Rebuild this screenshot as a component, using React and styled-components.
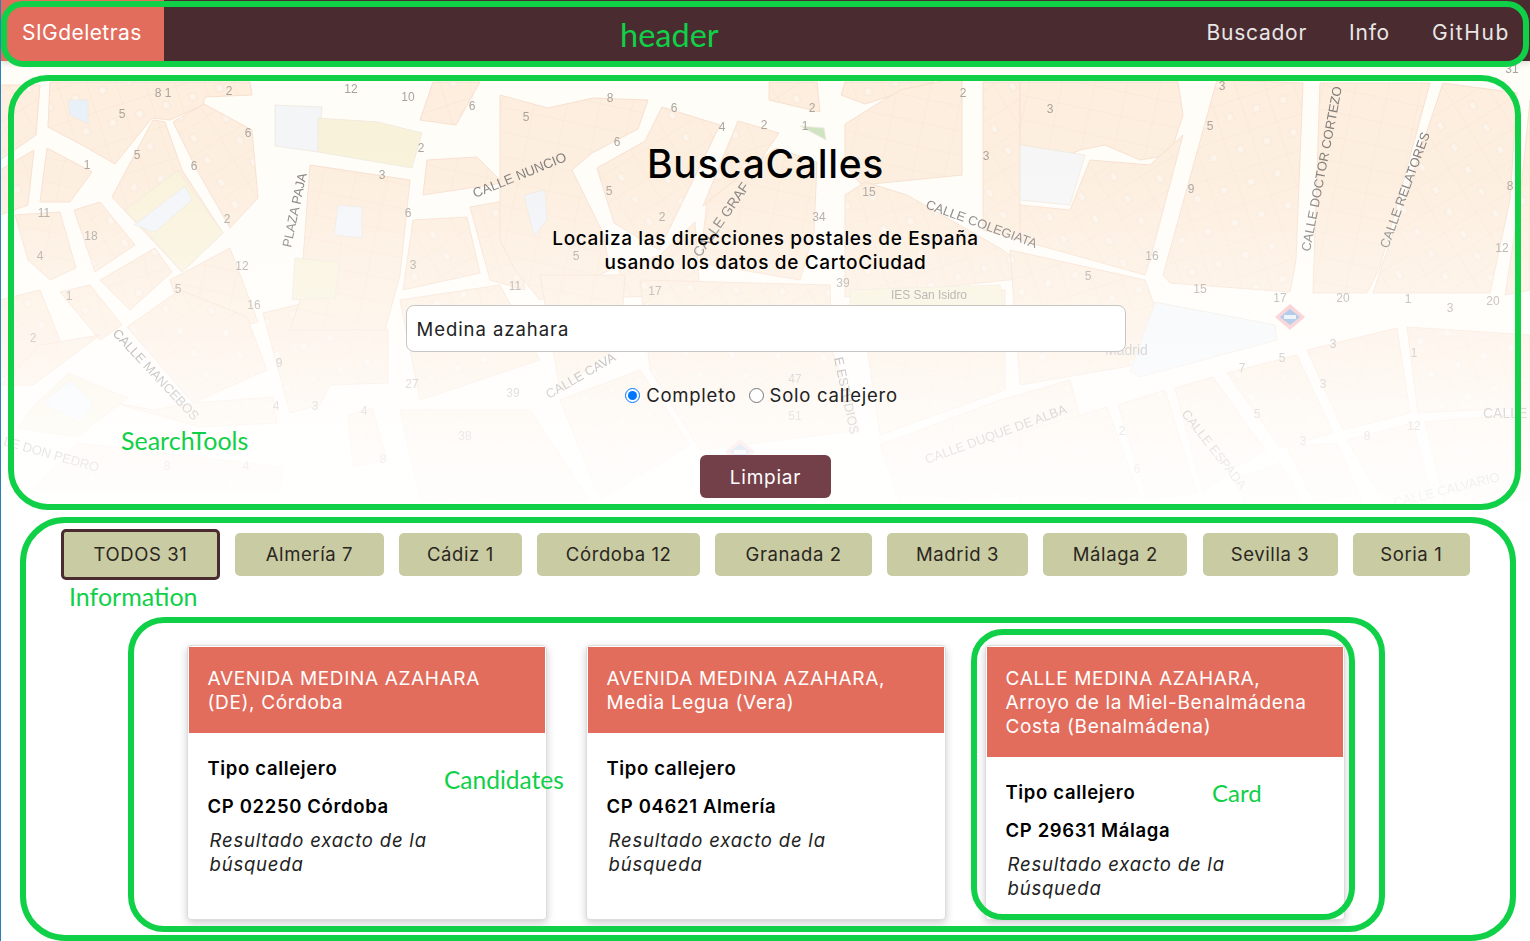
import styled, { createGlobalStyle } from "styled-components";

const GlobalStyle = createGlobalStyle`
  html, body {
    margin: 0;
    padding: 0;
    background: #fff;
  }
  * {
    box-sizing: border-box;
  }
`;

const uiFont = `Inter, "Open Sans", Arial, sans-serif`;

const Page = styled.div`
  position: relative;
  width: 1530px;
  height: 941px;
  overflow: hidden;
  border-left: 1px solid #2a80b9;
  background: #fff;
  color: #000;
  font-family: ${uiFont};
`;

const Navbar = styled.header`
  position: relative;
  z-index: 2;
  display: flex;
  align-items: center;
  justify-content: space-between;
  height: 61px;
  padding-right: 20px;
  background: #4a2c30;
  box-shadow: 0 2px 6px rgba(0, 0, 0, 0.15);
`;

const Brand = styled.a`
  display: flex;
  align-items: center;
  width: 163px;
  height: 100%;
  padding: 4px 0 0 21px;
  background: #e36d5d;
  color: #fff;
  font-size: 21px;
  letter-spacing: 0.45px;
`;

const NavLinks = styled.nav`
  display: flex;
  gap: 42px;
  padding-top: 4px;
`;

const NavLink = styled.a`
  color: #e9e6e6;
  font-size: 21px;
  letter-spacing: ${(p) => p.$track || 0.75}px;
`;

const Hero = styled.section`
  position: relative;
  display: flex;
  flex-direction: column;
  align-items: center;
  height: 449px;
  padding-top: 80px;
  overflow: hidden;
`;

const MapLayer = styled.svg`
  position: absolute;
  top: 0;
  left: -1px;
`;

const Title = styled.h1`
  position: relative;
  margin: 0;
  font-size: 39px;
  line-height: 46px;
  font-weight: 500;
  letter-spacing: 0.7px;
`;

const Subtitle = styled.p`
  position: relative;
  margin: 40px 0 0;
  font-size: 19px;
  line-height: 24px;
  font-weight: 500;
  letter-spacing: 0.65px;
  text-align: center;
`;

const SearchInput = styled.input`
  position: relative;
  display: block;
  width: 720px;
  height: 47px;
  margin-top: 30px;
  padding: 1px 10px 0;
  border: 1px solid #c9c5c5;
  border-radius: 8px;
  background: #fff;
  color: #222;
  font-family: ${uiFont};
  font-size: 18.5px;
  letter-spacing: 0.95px;
  outline: none;
`;

const RadioRow = styled.div`
  position: relative;
  display: flex;
  align-items: center;
  height: 24px;
  margin: 31px 8px 0 0;
  gap: 12px;
`;

const RadioLabel = styled.label`
  display: flex;
  align-items: center;
  gap: 6px;
  font-size: 18.5px;
  letter-spacing: 0.75px;
  color: #222;
`;

const Radio = styled.input`
  width: 15px;
  height: 15px;
  margin: 0;
`;

const ClearButton = styled.button`
  position: relative;
  width: 131px;
  height: 43px;
  margin-top: 48px;
  padding-top: 2px;
  border: 0;
  border-radius: 6px;
  background: #733f48;
  color: #fff;
  font-family: ${uiFont};
  font-size: 19px;
  letter-spacing: 0.75px;
`;

const Information = styled.section`
  padding-top: 19px;
`;

const Tabs = styled.div`
  display: flex;
  align-items: center;
  gap: 15.25px;
  padding-left: 60px;
`;

const Tab = styled.button`
  flex: none;
  width: ${(p) => p.$width}px;
  height: ${(p) => (p.$active ? 51 : 43)}px;
  padding-bottom: 2px;
  border: ${(p) => (p.$active ? "3px solid #4a2c30" : "0")};
  border-radius: 5px;
  background: #c9cba3;
  color: #2a2620;
  font-family: ${uiFont};
  font-size: 18.5px;
  letter-spacing: 0.6px;
`;

const Cards = styled.div`
  display: grid;
  grid-template-columns: repeat(3, 360px);
  justify-content: center;
  column-gap: 39px;
  margin-top: 65px;
`;

const Card = styled.article`
  display: flex;
  flex-direction: column;
  min-height: 275px;
  border: 1px solid #dcdcdc;
  border-radius: 4px;
  padding: 1px;
  background: #fff;
  box-shadow: 0 3px 8px rgba(0, 0, 0, 0.2);
`;

const CardTitle = styled.h3`
  margin: 0;
  padding: 20px 19px 18px;
  background: #e36d5d;
  color: #fff;
  font-size: 19px;
  line-height: 24px;
  font-weight: 400;
  letter-spacing: 0.65px;
  white-space: pre-line;
`;

const CardBody = styled.div`
  display: flex;
  flex-direction: column;
  padding: 23px 19px 18px;
`;

const CardLine = styled.p`
  margin: 0 0 14px;
  font-size: 18.5px;
  line-height: 24px;
  font-weight: 600;
  letter-spacing: 0.65px;
`;

const CardNote = styled.p`
  width: 240px;
  margin: -4px 0 0 2px;
  font-size: 18.5px;
  line-height: 24px;
  font-style: italic;
  letter-spacing: 0.8px;
  color: #222;
`;

/* review annotations drawn on top of the screenshot */
const Outline = styled.div`
  position: absolute;
  z-index: 5;
  left: ${(p) => p.$x}px;
  top: ${(p) => p.$y}px;
  width: ${(p) => p.$w}px;
  height: ${(p) => p.$h}px;
  border: 6px solid #10d048;
  border-radius: ${(p) => p.$r}px;
  pointer-events: none;
`;

const Note = styled.span`
  position: absolute;
  z-index: 6;
  left: ${(p) => p.$x}px;
  top: ${(p) => p.$y}px;
  color: #10d048;
  font-family: Lato, "Open Sans", sans-serif;
  font-size: ${(p) => p.$size}px;
  line-height: 1;
`;

const blocks = [
  // left
  ["48,127 50,82 250,82 252,95 205,97 203,105 170,120 152,118 115,164 82,145", "a"],
  ["40,202 47,148 92,172 70,202", "b"],
  ["112,197 153,120 165,122 182,170 223,233 182,272", "a"],
  ["173,122 204,104 252,130 258,198 230,228 197,170", "c"],
  ["15,215 60,212 76,268 50,280 28,260", "b"],
  ["74,210 100,202 135,245 95,272", "c"],
  ["100,280 155,248 172,272 130,310", "a"],
  ["170,280 230,248 258,322 190,340", "b"],
  ["0,300 40,290 60,340 0,380", "c"],
  ["60,292 90,285 122,325 100,340", "a"],
  ["40,345 100,335 33,385 0,385", "b"],
  ["127,327 180,290 247,317 267,370 193,403", "c"],
  ["263,313 330,297 388,330 388,383 330,385 320,405 290,413", "a"],
  ["115,403 153,410 193,403 273,397 277,423 200,427", "b"],
  ["77,443 283,467 280,490 33,490", "c"],
  ["348,415 372,408 387,460 353,467", "a"],
  ["300,300 310,165 410,180 400,275 385,330 290,330", "b"],
  ["0,85 40,85 36,135 0,160", "c"],
  ["0,170 34,150 28,205 0,215", "a"],
  // centre
  ["420,120 433,82 480,82 456,125", "a"],
  ["427,160 477,157 503,183 423,195", "b"],
  ["413,220 467,217 480,273 403,290", "c"],
  ["470,207 510,200 525,290 490,280", "a"],
  ["500,95 548,108 593,98 648,100 638,129 592,153 572,170 603,233 610,270 540,300 515,270 500,240", "b"],
  ["662,107 720,125 679,209 659,250 614,223 597,168 645,141", "c"],
  ["738,121 779,133 748,178 703,206", "a"],
  ["707,202 776,148 817,162 814,233 800,280 700,263", "b"],
  ["769,82 817,82 820,112 769,100", "c"],
  ["845,82 934,82 865,104 841,95", "a"],
  ["845,124 900,90 962,77 962,175 862,185 845,165", "b"],
  ["983,82 1020,82 1020,240 983,230", "c"],
  ["845,195 865,182 907,195 1003,250 1038,277 845,297", "a"],
  ["620,270 660,255 695,222 700,295 620,297", "c"],
  // lower middle
  ["400,300 500,285 540,360 420,400", "a"],
  ["540,275 625,275 620,345 560,390", "b"],
  ["640,280 830,285 832,350 860,430 700,450 650,370", "c"],
  ["560,400 640,370 690,445 600,500", "a"],
  ["400,410 530,410 590,500 420,500", "b"],
  ["880,445 1000,400 1070,380 1100,490 900,505", "c"],
  ["1010,250 1145,280 1160,320 1135,365 1020,385", "a"],
  ["860,300 1005,290 1005,390 880,435", "b"],
  // right
  ["1020,82 1178,82 1183,115 1170,155 1140,160 1105,145 1080,150 1058,160 1020,150", "b"],
  ["1020,205 1070,210 1090,160 1150,165 1183,135 1150,260 1145,275 1020,240", "c"],
  ["1217,80 1303,83 1296,260 1290,292 1170,283 1163,275", "a"],
  ["1320,83 1430,83 1380,267 1367,293 1313,293", "b"],
  ["1443,83 1517,93 1510,200 1490,293 1373,293", "c"],
  ["1530,100 1530,290 1505,295 1520,200", "a"],
  ["1307,350 1397,328 1410,413 1343,430", "b"],
  ["1227,373 1297,355 1333,433 1280,448", "c"],
  ["1407,327 1530,335 1530,407 1418,413", "a"],
  ["1175,388 1213,377 1265,450 1237,467 1203,493", "b"],
  ["1118,405 1165,390 1197,493 1147,500", "c"],
  ["1020,433 1107,407 1140,497 1020,507", "a"],
  ["1347,440 1413,423 1433,503 1385,505", "b"],
  ["1425,422 1510,415 1530,410 1530,500 1445,505", "c"],
  ["1287,447 1337,443 1363,503 1313,500", "a"],
  ["1233,480 1280,463 1303,503 1247,507", "b"],
];

const tinted = [
  ["275,105 322,107 318,152 275,146", "#f4f5f7"],
  ["318,118 378,122 422,133 412,168 318,152", "#f9f2da"],
  ["125,210 178,170 223,233 182,272 150,235", "#f9f2da"],
  ["134,225 185,186 192,200 155,232", "#f2f5f9"],
  ["295,258 340,262 335,298 292,300", "#f9f2da"],
  ["338,205 362,207 362,238 334,235", "#f3f5f9"],
  ["68,100 88,100 88,124 70,115", "#e9f1f8"],
  ["524,195 545,190 547,220 534,236", "#f1f3f7"],
  ["1020,145 1085,155 1070,205 1020,200", "#f6f6f7"],
  ["68,373 128,398 77,437 17,428 33,407", "#f9f2da"],
  ["43,403 70,380 93,403 80,423", "#f2f5f9"],
  ["850,290 1000,285 1004,310 850,312", "#f9f2da"],
  ["1155,302 1160,303 1275,325 1277,340 1140,377 1130,372", "#f4f6f9"],
  ["800,126 824,128 826,140", "#cfe3c0"],
];

const streets = [
  ["PLAZA PAJA", 291, 248, -78, 13],
  ["CALLE NUNCIO", 475, 198, -22, 13.5],
  ["CALLE GRAF", 700, 258, -55, 14],
  ["CALLE COLEGIATA", 925, 208, 20, 13],
  ["CALLE DOCTOR CORTEZO", 1310, 252, -79, 13],
  ["CALLE RELATORES", 1388, 249, -70, 13],
  ["CALLE MANCEBOS", 112, 334, 47, 13],
  ["LE DON PEDRO", 3, 445, 16, 13],
  ["CALLE CAVA", 549, 399, -30, 13],
  ["E ESTUDIOS", 834, 358, 78, 13],
  ["CALLE DUQUE DE ALBA", 927, 464, -20, 13],
  ["CALLE ESPADA", 1181, 414, 52, 13],
  ["CALLE", 1483, 418, 0, 14],
  ["CALLE CALVARIO", 1395, 507, -14, 13],
];

const numbers = [
  [163, 97, "8 1"], [229, 95, "2"], [351, 93, "12"], [408, 101, "10"], [472, 110, "6"], [122, 118, "5"], [248, 137, "6"],
  [137, 159, "5"], [87, 169, "1"], [194, 170, "6"], [421, 152, "2"], [382, 179, "3"], [44, 217, "11"], [91, 240, "18"],
  [40, 260, "4"], [227, 223, "2"], [242, 270, "12"], [408, 217, "6"], [413, 269, "3"], [178, 293, "5"], [69, 300, "1"],
  [254, 309, "16"], [33, 342, "2"], [279, 367, "9"], [315, 410, "3"], [276, 410, "4"], [246, 470, "4"], [167, 470, "8"],
  [364, 415, "4"], [383, 463, "8"], [610, 102, "8"], [526, 121, "5"], [674, 112, "6"], [722, 131, "4"], [764, 129, "2"],
  [812, 112, "2"], [617, 146, "6"], [609, 195, "5"], [662, 221, "2"], [576, 260, "5"], [515, 290, "11"], [655, 295, "17"],
  [805, 130, "1"], [869, 196, "15"], [819, 221, "34"], [843, 287, "39"], [963, 97, "2"], [986, 160, "3"], [1050, 113, "3"],
  [1222, 90, "3"], [1210, 130, "5"], [1191, 193, "9"], [1152, 260, "16"], [1088, 280, "5"], [1200, 293, "15"], [1280, 302, "17"],
  [1343, 302, "20"], [1408, 303, "1"], [1450, 312, "3"], [1493, 305, "20"], [1502, 252, "12"], [1510, 190, "8"], [1512, 73, "31"],
  [1333, 348, "3"], [1282, 362, "5"], [1242, 372, "7"], [1323, 388, "3"], [1414, 357, "1"], [1257, 418, "5"], [1367, 440, "8"],
  [1414, 430, "12"], [1303, 445, "3"], [1122, 435, "2"], [1137, 473, "6"], [412, 388, "27"], [513, 397, "39"], [465, 440, "38"],
  [795, 420, "51"], [795, 383, "47"],
];

function MetroSign({ x, y }) {
  return (
    <g transform={`translate(${x} ${y})`}>
      <path d="M-15 0 L0 -13 L15 0 L0 13 Z" fill="#f6b9bd" />
      <path d="M-10 0 L0 -8 L10 0 L0 8 Z" fill="#7fa8dc" />
      <rect x="-6" y="-2" width="12" height="4" fill="#e3ecf8" />
    </g>
  );
}

// blurred street map behind the search box
function StreetMap() {
  return (
    <MapLayer width="1530" height="449" viewBox="0 61 1530 449">
      <defs>
        <pattern id="parcelA" width="28" height="34" patternUnits="userSpaceOnUse" patternTransform="rotate(-18)">
          <rect width="28" height="34" fill="#fdeede" />
          <path d="M0 0H28M0 0V34" stroke="#f9e2d1" strokeWidth="0.8" />
          <rect x="10" y="12" width="7" height="7" fill="#fdf4ea" stroke="#f9e2d1" strokeWidth="0.6" />
        </pattern>
        <pattern id="parcelB" width="32" height="24" patternUnits="userSpaceOnUse" patternTransform="rotate(12)">
          <rect width="32" height="24" fill="#fdeede" />
          <path d="M0 0H32M0 0V24" stroke="#f9e2d1" strokeWidth="0.8" />
        </pattern>
        <pattern id="parcelC" width="26" height="38" patternUnits="userSpaceOnUse" patternTransform="rotate(58)">
          <rect width="26" height="38" fill="#fdeede" />
          <path d="M0 0H26M0 0V38" stroke="#f9e2d1" strokeWidth="0.8" />
          <rect x="8" y="20" width="8" height="6" fill="#fdf4ea" stroke="#f9e2d1" strokeWidth="0.6" />
        </pattern>
        <linearGradient id="mapFade" x1="0" y1="0" x2="0" y2="1">
          <stop offset="0" stopColor="#fff" stopOpacity="0" />
          <stop offset="0.25" stopColor="#fff" stopOpacity="0.05" />
          <stop offset="0.55" stopColor="#fff" stopOpacity="0.4" />
          <stop offset="0.8" stopColor="#fff" stopOpacity="0.75" />
          <stop offset="1" stopColor="#fff" stopOpacity="0.95" />
        </linearGradient>
        <filter id="mapBlur">
          <feGaussianBlur stdDeviation="0.6" />
        </filter>
      </defs>
      <g filter="url(#mapBlur)">
        <rect x="0" y="61" width="1530" height="449" fill="#fffdf8" />
        {blocks.map(([points, kind]) => (
          <polygon key={points} points={points} fill={`url(#parcel${kind.toUpperCase()})`} stroke="#f8e0cf" strokeWidth="1" />
        ))}
        {tinted.map(([points, fill]) => (
          <polygon key={points} points={points} fill={fill} stroke="#efe7dc" strokeWidth="0.8" />
        ))}
        <g fontFamily="Liberation Sans, Arial, sans-serif" fill="#7d7a78">
          {streets.map(([text, x, y, angle, size]) => (
            <text key={text} x={x} y={y} fontSize={size} transform={`rotate(${angle} ${x} ${y})`}>
              {text}
            </text>
          ))}
        </g>
        <g fontFamily="Liberation Sans, Arial, sans-serif" fill="#a9a29c" fontSize="12" textAnchor="middle">
          {numbers.map(([x, y, text]) => (
            <text key={`${x}-${y}`} x={x} y={y}>
              {text}
            </text>
          ))}
        </g>
        <text x="891" y="299" fontFamily="Liberation Sans, Arial, sans-serif" fontSize="12" fill="#95908c" textLength="76">
          IES San Isidro
        </text>
        <text x="1105" y="355" fontFamily="Liberation Sans, Arial, sans-serif" fontSize="14" fill="#b0adab">
          Madrid
        </text>
        <MetroSign x={1290} y={317} />
        <MetroSign x={740} y={452} />
      </g>
      <rect x="0" y="61" width="1530" height="449" fill="url(#mapFade)" />
    </MapLayer>
  );
}

const provinces = [
  { name: "TODOS 31", width: 159, active: true },
  { name: "Almería 7", width: 148.4 },
  { name: "Cádiz 1", width: 123 },
  { name: "Córdoba 12", width: 163 },
  { name: "Granada 2", width: 156.4 },
  { name: "Madrid 3", width: 141 },
  { name: "Málaga 2", width: 144 },
  { name: "Sevilla 3", width: 135 },
  { name: "Soria 1", width: 117 },
];

const results = [
  { title: "AVENIDA MEDINA AZAHARA\n(DE), Córdoba", cp: "CP 02250 Córdoba" },
  { title: "AVENIDA MEDINA AZAHARA,\nMedia Legua (Vera)", cp: "CP 04621 Almería" },
  { title: "CALLE MEDINA AZAHARA,\nArroyo de la Miel-Benalmádena\nCosta (Benalmádena)", cp: "CP 29631 Málaga" },
];

export default function App() {
  return (
    <Page>
      <GlobalStyle />
      <Navbar>
        <Brand>SIGdeletras</Brand>
        <NavLinks>
          <NavLink>Buscador</NavLink>
          <NavLink>Info</NavLink>
          <NavLink $track={1.6}>GitHub</NavLink>
        </NavLinks>
      </Navbar>

      <Hero>
        <StreetMap />
        <Title>BuscaCalles</Title>
        <Subtitle>
          Localiza las direcciones postales de España
          <br />
          usando los datos de CartoCiudad
        </Subtitle>
        <SearchInput defaultValue="Medina azahara" />
        <RadioRow>
          <RadioLabel>
            <Radio type="radio" name="mode" defaultChecked />
            Completo
          </RadioLabel>
          <RadioLabel>
            <Radio type="radio" name="mode" />
            Solo callejero
          </RadioLabel>
        </RadioRow>
        <ClearButton>Limpiar</ClearButton>
      </Hero>

      <Information>
        <Tabs>
          {provinces.map((p) => (
            <Tab key={p.name} $width={p.width} $active={p.active}>
              {p.name}
            </Tab>
          ))}
        </Tabs>
        <Cards>
          {results.map((r) => (
            <Card key={r.cp}>
              <CardTitle>{r.title}</CardTitle>
              <CardBody>
                <CardLine>Tipo callejero</CardLine>
                <CardLine>{r.cp}</CardLine>
                <CardNote>Resultado exacto de la búsqueda</CardNote>
              </CardBody>
            </Card>
          ))}
        </Cards>
      </Information>

      <Outline $x={0} $y={1} $w={1528} $h={66} $r={22} />
      <Outline $x={7} $y={75} $w={1513} $h={435} $r={40} />
      <Outline $x={19} $y={517} $w={1496} $h={424} $r={45} />
      <Outline $x={127} $y={617} $w={1257} $h={315} $r={36} />
      <Outline $x={970} $y={629} $w={384} $h={291} $r={32} />

      <Note $x={619} $y={19} $size={32.5}>header</Note>
      <Note $x={120} $y={428} $size={25}>SearchTools</Note>
      <Note $x={68} $y={584} $size={25}>Information</Note>
      <Note $x={443} $y={768} $size={24.5}>Candidates</Note>
      <Note $x={1211} $y={781} $size={24}>Card</Note>
    </Page>
  );
}
